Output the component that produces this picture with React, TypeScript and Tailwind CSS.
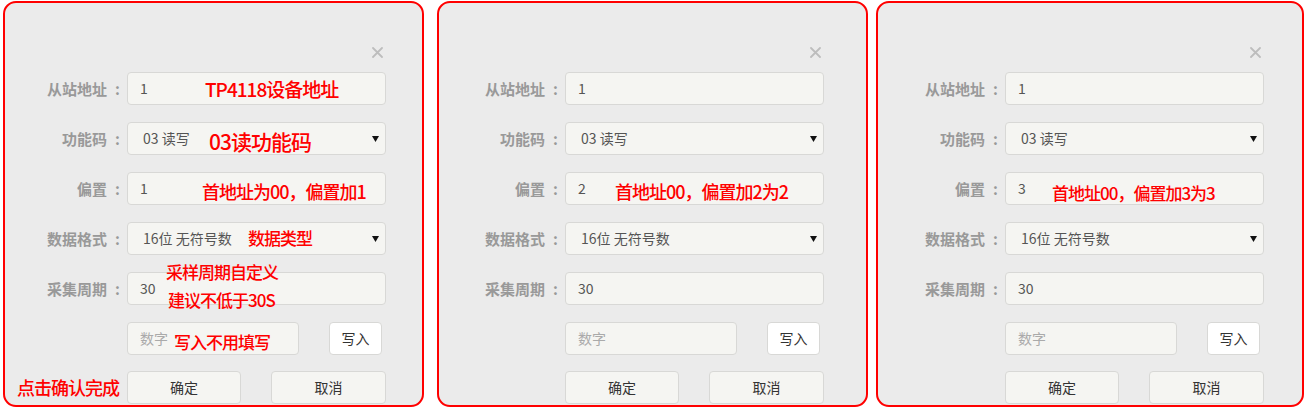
import React from "react";

type Ann = { text: string; cls: string };

function Arrow() {
  return (
    <svg width="7" height="6" viewBox="0 0 7 6" className="shrink-0">
      <path d="M0 0 L7 0 L3.5 6 Z" fill="#111" />
    </svg>
  );
}

function Close() {
  return (
    <svg width="11" height="11" viewBox="0 0 11 11">
      <path d="M1 1 L10 10 M10 1 L1 10" stroke="#bdbdbd" strokeWidth="1.8" strokeLinecap="round" />
    </svg>
  );
}

function Label({ name, w }: { name: string; w: string }) {
  return (
    <div className={`${w} flex shrink-0 items-center justify-end text-[15px] font-bold text-[#999] leading-none`}>
      <span>{name}</span>
      <span className="ml-[8px]">:</span>
    </div>
  );
}

function Field({ value, select }: { value: string; select?: boolean }) {
  return (
    <div
      className={`ml-[7px] flex h-[33px] w-[259px] items-center justify-between rounded-[4px] border border-[#d8d8d6] bg-[#f5f5f2] ${
        select ? "pl-[15px] pr-[6px]" : "pl-[12px] pr-[6px]"
      } text-[14px] text-[#555]`}
    >
      <span>{value}</span>
      {select ? <Arrow /> : null}
    </div>
  );
}

function Panel({
  outer,
  labelW,
  offset,
  anns,
}: {
  outer: string;
  labelW: string;
  offset: string;
  anns: Ann[];
}) {
  return (
    <div className={`${outer} relative mt-[1px] h-[406px] shrink-0 rounded-[13px] border-2 border-[#ff0000] bg-[#ebebeb]`}>
      <div className="flex flex-col pt-[44px]">
        <div className="flex h-[11px] items-center">
          <div className={`${labelW} shrink-0`} />
          <div className="ml-[7px] flex w-[259px] justify-end pr-[3px]">
            <Close />
          </div>
        </div>
        <div className="mt-[14px] flex flex-col gap-[17px]">
          <div className="flex items-center">
            <Label name="从站地址" w={labelW} />
            <Field value="1" />
          </div>
          <div className="flex items-center">
            <Label name="功能码" w={labelW} />
            <Field value="03 读写" select />
          </div>
          <div className="flex items-center">
            <Label name="偏置" w={labelW} />
            <Field value={offset} />
          </div>
          <div className="flex items-center">
            <Label name="数据格式" w={labelW} />
            <Field value="16位 无符号数" select />
          </div>
          <div className="flex items-center">
            <Label name="采集周期" w={labelW} />
            <Field value="30" />
          </div>
          <div className="flex items-center">
            <div className={`${labelW} shrink-0`} />
            <div className="ml-[7px] flex h-[33px] w-[172px] items-center rounded-[4px] border border-[#d8d8d6] bg-[#f5f5f2] pl-[12px] text-[14px] text-[#aaa]">
              数字
            </div>
            <div className="ml-[30px] flex h-[33px] w-[53px] items-center justify-center rounded-[4px] border border-[#d8d8d6] bg-white text-[14px] text-[#333]">
              写入
            </div>
          </div>
          <div className="-mt-[1px] flex items-center">
            <div className={`${labelW} shrink-0`} />
            <div className="ml-[7px] flex h-[33px] w-[114px] items-center justify-center rounded-[4px] border border-[#d8d8d6] bg-[#f5f5f2] text-[14px] text-[#333]">
              确定
            </div>
            <div className="ml-[30px] flex h-[33px] w-[115px] items-center justify-center rounded-[4px] border border-[#d8d8d6] bg-[#f5f5f2] text-[14px] text-[#333]">
              取消
            </div>
          </div>
        </div>
      </div>
      {anns.map((a, i) => (
        <span key={i} className={`absolute whitespace-nowrap font-medium leading-none text-[#ff0000] ${a.cls}`}>
          {a.text}
        </span>
      ))}
    </div>
  );
}

export default function App() {
  return (
    <div className="flex h-[409px] w-[1307px] overflow-hidden bg-white font-['Noto_Sans_CJK_SC','Noto_Sans',sans-serif]">
      <Panel
        outer="ml-[3px] w-[421px]"
        labelW="w-[115px]"
        offset="1"
        anns={[
          { text: "TP4118设备地址", cls: "left-[200px] top-[76px] text-[19px] tracking-[-1px]" },
          { text: "03读功能码", cls: "left-[204px] top-[128px] text-[21px] tracking-[-1px]" },
          { text: "首地址为00，偏置加1", cls: "left-[197px] top-[179px] text-[18px] tracking-[-1px]" },
          { text: "数据类型", cls: "left-[243px] top-[226px] text-[17px] tracking-[-1px]" },
          { text: "采样周期自定义", cls: "left-[161px] top-[260px] text-[17px] tracking-[-1px]" },
          { text: "建议不低于30S", cls: "left-[163px] top-[288px] text-[17px] tracking-[-1px]" },
          { text: "写入不用填写", cls: "left-[169px] top-[330px] text-[17px] tracking-[-1px]" },
          { text: "点击确认完成", cls: "left-[12px] top-[375px] text-[18px] tracking-[-1px]" },
        ]}
      />
      <Panel
        outer="ml-[13px] w-[431px]"
        labelW="w-[119px]"
        offset="2"
        anns={[{ text: "首地址00，偏置加2为2", cls: "left-[176px] top-[179px] text-[18px] tracking-[-1px]" }]}
      />
      <Panel
        outer="ml-[8px] w-[428px]"
        labelW="w-[120px]"
        offset="3"
        anns={[{ text: "首地址00，偏置加3为3", cls: "left-[174px] top-[181px] text-[17px] tracking-[-1px]" }]}
      />
    </div>
  );
}
